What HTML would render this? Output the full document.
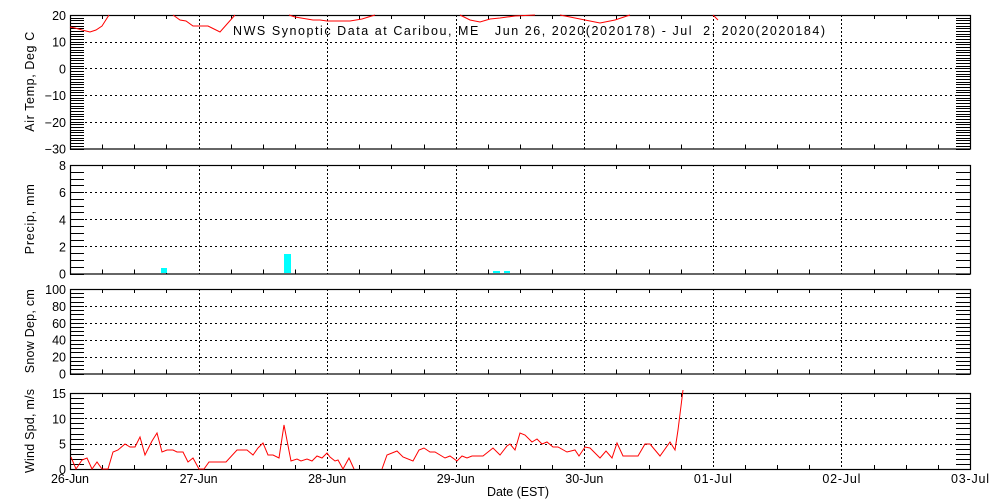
<!DOCTYPE html>
<html><head><style>
html,body{margin:0;padding:0;background:#fff;width:1000px;height:500px;overflow:hidden}
svg{display:block}
text{font-family:"Liberation Sans",sans-serif;font-size:12.5px;fill:#000}
</style></head><body>
<svg id="s" width="1000" height="500" xmlns="http://www.w3.org/2000/svg"></svg>
<script>
var s=document.getElementById('s'),h='';
var L=70,R=970,D=900/7;
function ln(x1,y1,x2,y2,c,da){h+='<line x1="'+x1+'" y1="'+y1+'" x2="'+x2+'" y2="'+y2+'" stroke="'+(c||'#000')+'" stroke-width="1"'+(da?' stroke-dasharray="'+da+'"':'')+' shape-rendering="crispEdges"/>';}
function tx(x,y,t,a,rot,tl){h+='<text x="'+x+'" y="'+y+'"'+(a?' text-anchor="'+a+'"':'')+(tl?' textLength="'+tl+'" lengthAdjust="spacing"':'')+(rot?' transform="rotate(-90 '+x+' '+y+')"':'')+'>'+t+'</text>';}
var P=[[15,148.5,-30,20,10,1,'Air Temp, Deg C',100],[165,273.5,0,8,2,0.5,'Precip, mm',70],[289,373.5,0,100,20,5,'Snow Dep, cm',84],[393,469,0,15,5,1,'Wind Spd, m/s',84]];
P.forEach(function(p){
 var t=p[0],b=p[1],mn=p[2],mx=p[3];
 function Y(v){return b-(v-mn)/(mx-mn)*(b-t);}
 h+='<rect x="'+(L+.5)+'" y="'+(t+.5)+'" width="'+(R-L)+'" height="'+(b-t)+'" fill="none" stroke="#000" stroke-width="1.2"/>';
 for(var d=1;d<7;d++){var x=Math.round(L+d*D)+.5;ln(x,t,x,b,'#000','2,2');}
 for(var i=1;i<28;i++){if(i%4==0)continue;var x=Math.round(L+i*D/4)+.5;ln(x,t,x,t+4);ln(x,b,x,b-4);}
 for(var v=mn;v<=mx+1e-6;v+=p[5]){var y=Math.round(Y(v))+.5;ln(L,y,L+14,y);ln(R,y,R-14,y);}
 for(var v=mn;v<=mx;v+=p[4]){var y=Math.round(Y(v))+.5;if(v>mn&&v<mx)ln(L,y,R,y,'#000','2,3');tx(66,Y(v)+5,String(v).replace('-','\u2212'),'end');}
 tx(34,(t+b)/2,p[6],'middle',1,p[7]);
});
var days=['26-Jun','27-Jun','28-Jun','29-Jun','30-Jun','01-Jul','02-Jul','03-Jul'];
days.forEach(function(d,i){tx(L+i*D,483,d,'middle',0,38);});
tx(518,496,'Date (EST)','middle',0,62);
tx(233,35,'NWS Synoptic Data at Caribou, ME &#160; Jun 26, 2020(2020178) - Jul &#160;2, 2020(2020184)',null,0,592);
function pl(pts){h+='<polyline fill="none" stroke="#f00" stroke-width="1" points="'+pts+'"/>';}
pl('70,27 75,28 82,30 90,32 96,30 102,26 109,15');
pl('173,15 180,20 186,21 193,26 208,26 212,28 220,32 235,15');
pl('289,15 295,17 301,18 313,20 320,20 327,21 340,21 350,21 362,19 375,15');
pl('460,15 470,20 480,22 490,19 500,18 515,16 535,15');
pl('560,15 575,18 590,21 600,23 615,20 630,15');
pl('713,15 718,20');
pl('71,457 76,469 82,460 87,458 92,469 97,462 102,469 108,469 113,452 118,450 125,444 130,447 135,447 140,437 145,455 152,441 157,433 162,452 167,450 173,450 177,452 183,452 188,462 193,458 199,469 204,469 209,462 226,462 237,450 247,450 253,455 258,448 263,443 268,455 273,455 279,458 284,425 291,461 297,459 301,461 307,459 312,461 317,456 322,458 327,453 330,457 335,461 338,460 343,469 349,458 354,469');
pl('382,469 387,455 397,451 403,457 413,461 419,450 424,448 430,452 435,452 445,458 450,456 457,461 462,456 467,458 472,456 483,456 493,448 500,455 507,446 510,444 515,450 520,433 525,435 532,442 537,439 542,444 547,442 553,447 558,447 567,452 575,450 579,456 585,447 590,448 600,458 606,451 612,458 617,443 623,456 638,456 645,444 650,444 660,456 670,442 675,450 678,430 683,390');
h+='<rect x="161" y="268" width="6" height="5" fill="#0ff"/><rect x="284" y="254" width="7" height="19" fill="#0ff"/><rect x="493" y="271" width="7" height="2" fill="#0ff"/><rect x="504" y="271" width="6" height="2" fill="#0ff"/>';
s.innerHTML=h;
</script>
</body></html>
